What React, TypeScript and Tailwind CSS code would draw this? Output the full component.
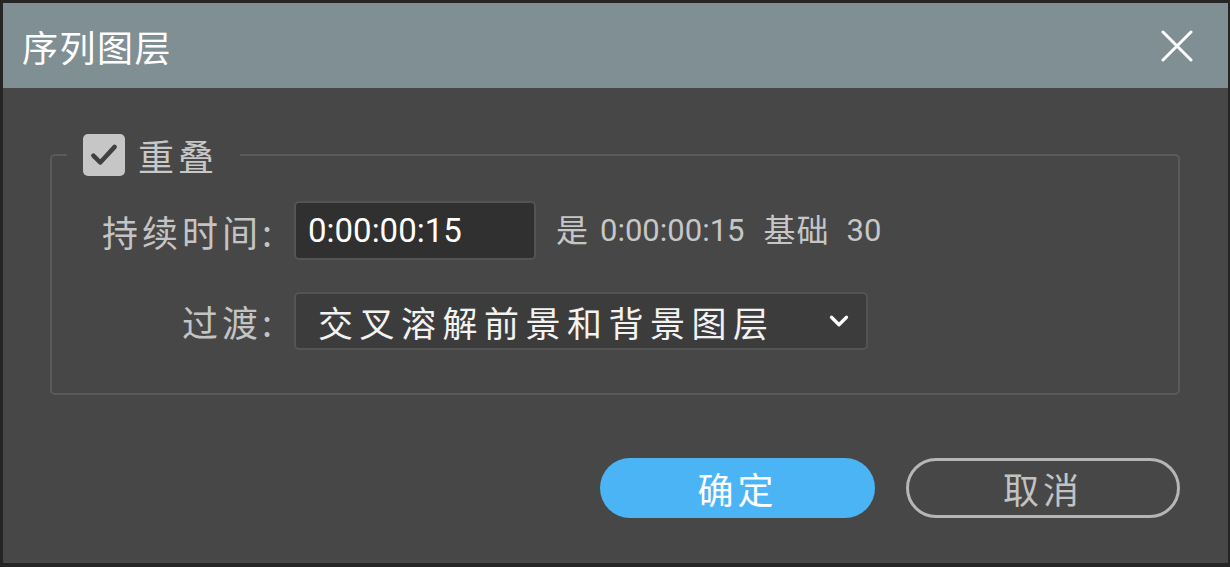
import { ChevronDown } from "lucide-react";

const cjk = "font-['Noto_Sans_CJK_SC',sans-serif]";
const mixed = "font-['Roboto','Noto_Sans_CJK_SC',sans-serif]";

function CheckBox() {
  return (
    <span className="flex h-[42px] w-[42px] items-center justify-center rounded-[5px] bg-[#c6c6c6]">
      <svg width="30" height="30" viewBox="0 0 24 24" fill="none" stroke="#404040" strokeWidth="3.6" strokeLinecap="round" strokeLinejoin="round">
        <path d="M3.5 12.5l5.5 5.5L20.5 5.5" />
      </svg>
    </span>
  );
}

function CloseIcon() {
  return (
    <svg width="32" height="32" viewBox="0 0 32 32" fill="none" stroke="white" strokeWidth="3" strokeLinecap="round">
      <path d="M2 2L30 30M30 2L2 30" />
    </svg>
  );
}

export default function App() {
  return (
    <div className="flex h-[567px] w-[1230px] bg-[#252525] pt-[3px] pl-[3px] pr-[2px] pb-[4px]">
      <div className="flex flex-1 flex-col bg-[#474747]">
        {/* title bar */}
        <div className="flex h-[85px] items-center justify-between bg-[#7f8f94] pl-[19px] pr-[35px]">
          <span className={`${cjk} text-[36px] leading-none tracking-[1.5px] text-white`}>序列图层</span>
          <CloseIcon />
        </div>

        <div className="flex flex-1 flex-col pl-[47px] pr-[48px] pt-[46px]">
          <fieldset className="rounded-[5px] border-2 border-[#5a5a5a] pb-[43px]">
            <legend className="ml-[15px] flex items-center pl-[16px] pr-[22px]">
              <CheckBox />
              <span className={`${cjk} ml-[13px] text-[36px] leading-none tracking-[4px] text-[#c8c8c8]`}>重叠</span>
            </legend>

            <div className="mt-[25px] grid grid-cols-[220px_auto] items-center gap-x-[22px] gap-y-[32px]">
              <span className={`${cjk} text-right text-[36px] leading-none text-[#c4c4c4]`}>
                <span className="tracking-[4px]">持续时间</span>:
              </span>
              <div className="flex items-center">
                <div className="flex h-[59px] w-[242px] items-center rounded-[5px] border-2 border-[#545454] bg-[#303030] pl-[12px]">
                  <span className="font-['Roboto',sans-serif] text-[33px] leading-none text-white">0:00:00:15</span>
                </div>
                <span className={`${mixed} ml-[20px] flex items-center text-[31px] leading-none text-[#c6c6c6]`}>
                  <span className="text-[32px]">是</span>
                  <span className="ml-[12px]">0:00:00:15</span>
                  <span className="ml-[19px] text-[32px] tracking-[1px]">基础</span>
                  <span className="ml-[17px]">30</span>
                </span>
              </div>

              <span className={`${cjk} text-right text-[36px] leading-none text-[#c4c4c4]`}>
                <span className="tracking-[4px]">过渡</span>:
              </span>
              <div className="flex h-[58px] w-[574px] items-center justify-between rounded-[5px] border-2 border-[#545454] bg-[#3c3c3c] pl-[22px] pr-[12px]">
                <span className={`${cjk} text-[35px] leading-none tracking-[6.5px] text-[#f2f2f2]`}>交叉溶解前景和背景图层</span>
                <ChevronDown className="h-[30px] w-[30px] text-white" strokeWidth={2.6} />
              </div>
            </div>
          </fieldset>

          <div className="mt-[63px] flex justify-end gap-[31px]">
            <button className={`${cjk} flex h-[60px] w-[275px] items-center justify-center rounded-full bg-[#4bb4f5] text-[36px] leading-none tracking-[4px] text-white`}>
              确定
            </button>
            <button className={`${cjk} flex h-[60px] w-[274px] items-center justify-center rounded-full border-[3px] border-[#b6b6b6] text-[36px] leading-none tracking-[4px] text-[#c2c2c2]`}>
              取消
            </button>
          </div>
        </div>
      </div>
    </div>
  );
}
